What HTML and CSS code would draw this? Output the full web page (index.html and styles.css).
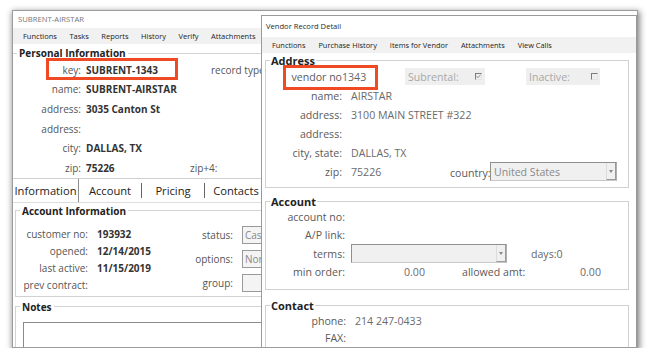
FILE: index.html
```html
<!DOCTYPE html>
<html lang="en">
<head>
    <meta charset="UTF-8">
    <title>Subrent / Vendor Record Detail</title>
    <link rel="stylesheet" href="styles.css">
</head>
<body>

    <div class="shot">

        <!-- main record window (behind) -->
        <div class="win main">
            <div class="win-title">SUBRENT-AIRSTAR</div>
            <nav class="menu main-menu">
                <span>Functions</span><span>Tasks</span><span>Reports</span><span>History</span><span>Verify</span><span>Attachments</span>
            </nav>

            <fieldset class="group personal">
                <legend>Personal Information</legend>
                <div class="p-rows">
                    <span class="lbl">key:</span><span class="val">SUBRENT-1343</span><span class="aside rec">record type</span>
                    <span class="lbl">name:</span><span class="val">SUBRENT-AIRSTAR</span><span></span>
                    <span class="lbl">address:</span><span class="val">3035 Canton St</span><span></span>
                    <span class="lbl">address:</span><span class="val"></span><span></span>
                    <span class="lbl">city:</span><span class="val">DALLAS, TX</span><span></span>
                    <span class="lbl">zip:</span><span class="val">75226</span><span class="aside">zip+4:</span>
                </div>
            </fieldset>

            <div class="tabs">
                <span class="tab active">Information</span>
                <span class="tab">Account</span>
                <i class="tab-sep"></i>
                <span class="tab">Pricing</span>
                <i class="tab-sep"></i>
                <span class="tab">Contacts</span>
            </div>

            <fieldset class="group boxed acct-info">
                <legend>Account Information</legend>
                <div class="acct-cols">
                    <div class="info-rows">
                        <span class="lbl">customer no:</span><span class="val">193932</span>
                        <span class="lbl">opened:</span><span class="val">12/14/2015</span>
                        <span class="lbl">last active:</span><span class="val">11/15/2019</span>
                        <span class="lbl">prev contract:</span><span class="val"></span>
                    </div>
                    <div class="opt-rows">
                        <span class="lbl">status:</span><span class="box">Cas</span>
                        <span class="lbl">options:</span><span class="box">Nor</span>
                        <span class="lbl">group:</span><span class="box"></span>
                    </div>
                </div>
            </fieldset>

            <fieldset class="group boxed notes">
                <legend>Notes</legend>
                <div class="notes-box"></div>
            </fieldset>
        </div>

        <!-- vendor detail window (front) -->
        <div class="win vendor">
            <div class="win-title vendor-title">Vendor Record Detail</div>
            <nav class="menu vendor-menu">
                <span>Functions</span><span>Purchase History</span><span>Items for Vendor</span><span>Attachments</span><span>View Calls</span>
            </nav>

            <fieldset class="group v-group address">
                <legend>Address</legend>
                <div class="v-head">
                    <span class="lbl">vendor no</span><span class="vendor-no">1343</span>
                    <span class="flag subrental">Subrental:
                        <i class="chk"><svg width="5" height="5" viewBox="0 0 5 5"><polyline points="0.5,2 2,3.8 4.6,0.6" fill="none" stroke="#9a9a9a" stroke-width="1"/></svg></i>
                    </span>
                    <span class="flag inactive">Inactive:<i class="chk"></i></span>
                </div>
                <div class="v-rows">
                    <span class="lbl">name:</span><span class="val">AIRSTAR</span>
                    <span class="lbl">address:</span><span class="val">3100 MAIN STREET #322</span>
                    <span class="lbl">address:</span><span class="val"></span>
                    <span class="lbl">city, state:</span><span class="val">DALLAS, TX</span>
                    <span class="lbl">zip:</span>
                    <span class="val line">
                        <span class="zip-val">75226</span>
                        <span class="lbl country-lbl">country:</span>
                        <span class="select country">United States<i class="drop"></i></span>
                    </span>
                </div>
            </fieldset>

            <fieldset class="group v-group account">
                <legend>Account</legend>
                <div class="a-rows">
                    <span class="lbl">account no:</span><span class="val"></span>
                    <span class="lbl">A/P link:</span><span class="val"></span>
                    <span class="lbl">terms:</span>
                    <span class="val line">
                        <span class="select terms"><i class="drop"></i></span>
                        <span class="days">days:0</span>
                    </span>
                    <span class="lbl">min order:</span>
                    <span class="val line amounts">
                        <span class="amt">0.00</span>
                        <span class="lbl allowed">allowed amt:</span>
                        <span class="amt last">0.00</span>
                    </span>
                </div>
            </fieldset>

            <fieldset class="group v-group contact">
                <legend>Contact</legend>
                <div class="c-rows">
                    <span class="lbl">phone:</span><span class="val">214 247-0433</span>
                    <span class="lbl">FAX:</span><span class="val"></span>
                </div>
            </fieldset>
        </div>

        <!-- red callouts drawn over the screenshot -->
        <div class="callout callout-key"></div>
        <div class="callout callout-vendor"></div>
    </div>

</body>
</html>
```

FILE: styles.css
```css
* {
    margin: 0;
    padding: 0;
    box-sizing: border-box;
}

body {
    background: #ffffff;
    font-family: 'Open Sans', 'Noto Sans', sans-serif;
    color: #555555;
}

.shot {
    position: relative;
    width: 626px;
    height: 338px;
    margin: 10px 0 0 12px;
    border: 1px solid #9c9c9c;
    background: #ffffff;
    overflow: hidden;
    box-shadow: 1px 2px 6px 1px rgba(0, 0, 0, 0.45);
}

/* window chrome */
.win-title {
    height: 17px;
    line-height: 17px;
    padding-left: 5px;
    font-size: 7.7px;
    color: #777777;
    white-space: nowrap;
}

.menu {
    display: flex;
    align-items: center;
    height: 16px;
    background: #f1f1f1;
    color: #222222;
    white-space: nowrap;
}

.main-menu {
    padding-left: 10px;
    gap: 12.5px;
    font-size: 7.5px;
}

.lbl {
    text-align: right;
    white-space: nowrap;
}

.val {
    white-space: nowrap;
}

/* group boxes */
.group {
    min-width: 0;
    margin: 0;
    padding: 0;
    border: none;
}

.group legend {
    margin-left: 4px;
    padding: 0 2px;
    font-size: 10px;
    line-height: 14px;
    font-weight: 700;
    color: #222222;
}

.personal {
    margin-top: 2px;
    border-top: 1px solid #d2d2d2;
}

.p-rows {
    display: grid;
    grid-template-columns: 68px 99px auto;
    column-gap: 5px;
    grid-auto-rows: 19.6px;
    align-items: center;
    font-size: 10px;
}

.p-rows .val,
.info-rows .val {
    font-weight: 700;
    color: #333333;
}

.aside {
    white-space: nowrap;
}

.rec {
    padding-left: 21px;
}

/* tab strip */
.tabs {
    display: flex;
    align-items: center;
    height: 25px;
    border-top: 1px solid #d0d0d0;
    border-bottom: 1px solid #dddddd;
    font-size: 11.2px;
    color: #222222;
}

.tab {
    width: 62px;
    text-align: center;
    white-space: nowrap;
}

.tab.active {
    width: 66px;
    align-self: stretch;
    display: flex;
    align-items: center;
    justify-content: center;
    border-right: 1px solid #8c8c8c;
}

.tab-sep {
    width: 1px;
    height: 15px;
    background: #666666;
}

.boxed {
    margin-left: 2px;
    border-top: 1px solid #d2d2d2;
    border-left: 1px solid #d2d2d2;
    border-bottom: 1px solid #d2d2d2;
}

.acct-info {
    margin-top: 1px;
    padding-bottom: 2px;
}

.acct-cols {
    display: flex;
    padding-top: 8px;
    font-size: 10px;
}

.info-rows {
    display: grid;
    width: 157px;
    grid-template-columns: 72px auto;
    column-gap: 9px;
    grid-auto-rows: 17px;
    align-items: center;
}

.opt-rows {
    display: grid;
    grid-template-columns: 60px 40px;
    column-gap: 9px;
    row-gap: 6px;
    grid-auto-rows: 18px;
    align-items: center;
}

.box {
    height: 18px;
    line-height: 16px;
    padding-left: 2px;
    border: 1px solid #9a9a9a;
    background: #f4f4f4;
    color: #888888;
    overflow: hidden;
}

.notes {
    margin-top: 3px;
    border-bottom: none;
}

.notes-box {
    height: 40px;
    margin: 8px 0 0 7px;
    border: 1px solid #8a8a8a;
}

/* vendor window */
.vendor {
    position: absolute;
    left: 248px;
    top: 4px;
    width: 376px;
    height: 345px;
    border: 1px solid #9a9a9a;
    background: #ffffff;
}

.vendor-title {
    height: 21px;
    line-height: 21px;
    padding-left: 4px;
    font-size: 7.6px;
    color: #2a2a2a;
}

.vendor-menu {
    padding-left: 10px;
    gap: 13px;
    font-size: 7.4px;
}

.v-group {
    width: 364px;
    margin-left: 3px;
    border: 1px solid #d0d0d0;
    font-size: 10.6px;
}

.v-group legend {
    margin-left: 4px;
    padding: 0 1px;
    font-size: 11px;
    line-height: 13px;
}

.v-group .lbl {
    color: #5a5a5a;
}

.v-group .val {
    color: #6a6a6a;
}

.address {
    margin-top: 1px;
    padding-bottom: 6px;
}

.v-head {
    display: flex;
    align-items: center;
    height: 19px;
}

.v-head .lbl {
    width: 76px;
}

.vendor-no {
    width: 63px;
    color: #666666;
}

.flag {
    display: flex;
    align-items: center;
    justify-content: space-between;
    height: 17px;
    padding: 0 3px;
    background: #efefef;
    color: #a8a8a8;
}

.subrental {
    width: 80px;
}

.inactive {
    width: 74px;
    margin-left: 41px;
    padding-right: 2px;
}

.chk {
    display: flex;
    align-items: center;
    justify-content: center;
    width: 7px;
    height: 7px;
    border-top: 1px solid #7c7c7c;
    border-left: 1px solid #7c7c7c;
    border-right: 1px solid #e4e4e4;
    border-bottom: 1px solid #e4e4e4;
}

.v-rows {
    display: grid;
    grid-template-columns: 76px auto;
    column-gap: 9px;
    grid-auto-rows: 19px;
    align-items: center;
}

.line {
    display: flex;
    align-items: center;
}

.zip-val {
    width: 99px;
}

.country-lbl {
    width: 38px;
    margin-right: 2px;
    padding-top: 3px;
}

.select {
    display: flex;
    align-items: center;
    height: 19px;
    padding-left: 3px;
    border: 1px solid #8f8f8f;
    border-right-color: #b0b0b0;
    border-bottom-color: #c8c8c8;
    background: #f0f0f0;
    color: #8a8a8a;
    white-space: nowrap;
}

.country {
    width: 127px;
}

.terms {
    width: 156px;
}

.drop {
    position: relative;
    margin-left: auto;
    width: 10px;
    height: 17px;
    border-left: 1px solid #dcdcdc;
    border-right: 1px solid #9a9a9a;
    border-bottom: 1px solid #9a9a9a;
}

.drop::after {
    content: "";
    position: absolute;
    left: 2px;
    top: 7px;
    border-left: 2.5px solid transparent;
    border-right: 2.5px solid transparent;
    border-top: 3px solid #8a8a8a;
}

.account {
    margin-top: 7px;
    padding-bottom: 8px;
}

.a-rows {
    display: grid;
    grid-template-columns: 79px auto;
    column-gap: 6px;
    grid-template-rows: 18px 18px 19px 18px;
    align-items: center;
}

.days {
    margin-left: 24px;
    color: #666666;
}

.amounts {
    padding-right: 27px;
}

.amt {
    width: 74px;
    text-align: right;
}

.allowed {
    margin-left: 37px;
}

.amt.last {
    width: auto;
    margin-left: auto;
}

.contact {
    margin-top: 9px;
    padding-bottom: 4px;
}

.c-rows {
    display: grid;
    grid-template-columns: 80px auto;
    column-gap: 9px;
    grid-auto-rows: 17px;
    align-items: center;
}

/* red annotation boxes */
.callout {
    position: absolute;
    border: 3px solid #ef4a23;
}

.callout-key {
    left: 33px;
    top: 47px;
    width: 132px;
    height: 22px;
}

.callout-vendor {
    left: 270px;
    top: 54px;
    width: 95px;
    height: 25px;
}
```
